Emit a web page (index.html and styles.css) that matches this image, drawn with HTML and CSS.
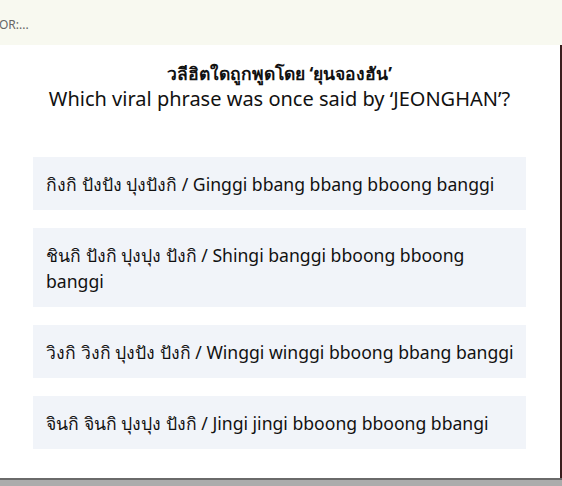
FILE: index.html
```html
<!DOCTYPE html>
<html lang="th">
<head>
<meta charset="utf-8">
<link rel="stylesheet" href="styles.css">
</head>
<body>
<div class="topbar"><span class="crumb">OR:...</span></div>
<div class="main">
  <div class="card">
    <div class="title-th">วลีฮิตใดถูกพูดโดย ‘ยุนจองฮัน’</div>
    <div class="title-en">Which viral phrase was once said by ‘JEONGHAN’?</div>
    <div class="options">
      <div class="option">กิงกิ ปังปัง ปุงปังกิ / Ginggi bbang bbang bboong banggi</div>
      <div class="option">ชินกิ ปังกิ ปุงปุง ปังกิ / Shingi banggi bboong bboong banggi</div>
      <div class="option">วิงกิ วิงกิ ปุงปัง ปังกิ / Winggi winggi bboong bbang banggi</div>
      <div class="option">จินกิ จินกิ ปุงปุง ปังกิ / Jingi jingi bboong bboong bbangi</div>
    </div>
  </div>
  <div class="edge"></div>
</div>
<div class="bottom"></div>
</body>
</html>
```

FILE: styles.css
```css
html, body {
  margin: 0;
  padding: 0;
}
body {
  width: 562px;
  height: 486px;
  overflow: hidden;
  font-family: "Noto Sans", "Open Sans", sans-serif;
  color: #111;
  background: #fff;
}
.topbar {
  height: 45px;
  background: #f8f9f0;
  display: flex;
  align-items: center;
  padding-top: 3px;
  box-sizing: border-box;
}
.crumb {
  font-size: 12px;
  color: #666;
  margin-left: -1px;
}
.main {
  display: flex;
  height: 433px;
}
.card {
  flex: 1;
  background: #fff;
  padding: 0 34px 0 33px;
  box-sizing: border-box;
}
.edge {
  width: 2px;
  background: #3a1e1e;
}
.title-th {
  margin-top: 16px;
  text-align: center;
  font-weight: 700;
  font-size: 17.5px;
  line-height: 24px;
}
.title-en {
  text-align: center;
  font-size: 20px;
  line-height: 28px;
  margin-top: 0;
}
.options {
  margin-top: 44px;
  display: flex;
  flex-direction: column;
  gap: 18.5px;
}
.option {
  background: #f1f4f9;
  padding: 13.5px 6px 13px 13px;
  font-size: 17.6px;
  line-height: 26px;
}
.bottom {
  height: 8px;
  border-top: 2px solid #6a6a6a;
  background: #acacac;
  box-sizing: border-box;
}
```
